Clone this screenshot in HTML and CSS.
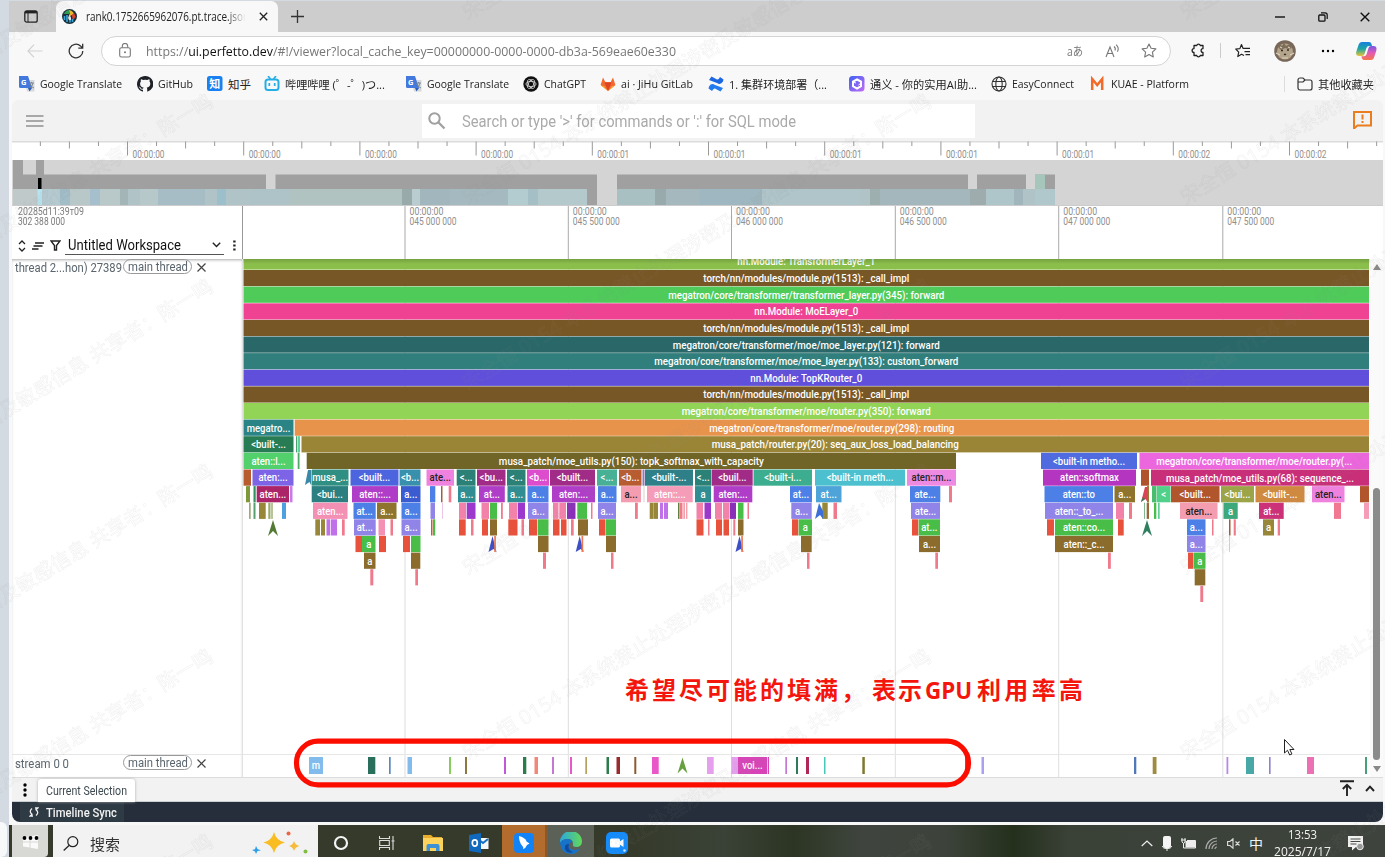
FILE: index.html
```html
<!DOCTYPE html>
<html lang="zh">
<head>
<meta charset="utf-8">
<title>Perfetto UI</title>
<link rel="stylesheet" href="styles.css">
</head>
<body>
<div class="desktop">
<div class="rail"><i></i></div>
<div class="window">
  <div class="tabstrip">
    <svg class="workspaces" width="14" height="13" viewBox="0 0 14 13"><rect x=".8" y=".8" width="12.4" height="11.4" rx="2" fill="none" stroke="#222" stroke-width="1.3"/><path d="M1 2.200h12" stroke="#222" stroke-width="2.400"/><path d="M4 3v9" stroke="#222" stroke-width="1"/></svg>
    <div class="tab">
      <svg width="15" height="15" viewBox="0 0 15 15"><circle cx="7.5" cy="7.5" r="7.5" fill="#17303c"/><path d="M2 5a6 6 0 0 1 5-4v4z" fill="#2e9b50"/><path d="M7 1a6 6 0 0 1 5 4l-4 2z" fill="#e9b52c"/><path d="M12 4l1.800 4-3 3-1-5z" fill="#d9402f"/><path d="M2.500 7v4M5 6v7M8 8v5.500M10.500 10v3" stroke="#3aa6d8" stroke-width="1.600" fill="none"/><path d="M6 9l1.500-4L9 9v2H7z" fill="#fff" opacity=".8"/></svg>
      <span class="title" data-w="163">rank0.1752665962076.pt.trace.json</span>
      <svg width="9" height="9" viewBox="0 0 9 9"><path d="M.8.8l7.400 7.400M8.200.8L.8 8.200" stroke="#222" stroke-width="1.300"/></svg>
    </div>
    <svg class="plus" width="13" height="13" viewBox="0 0 13 13"><path d="M6.500 0v13M0 6.500h13" stroke="#333" stroke-width="1.300"/></svg>
    <div class="winbtns">
      <svg width="10" height="10" viewBox="0 0 10 10"><path d="M0 5h10" stroke="#111" stroke-width="1.400"/></svg>
      <svg width="10" height="10" viewBox="0 0 10 10"><rect x=".8" y="3" width="6.200" height="6.200" rx="1" fill="none" stroke="#111" stroke-width="1.300"/><path d="M3 .8h4a2.200 2.200 0 0 1 2.200 2.200v4" fill="none" stroke="#111" stroke-width="1.200"/></svg>
      <svg width="10" height="10" viewBox="0 0 10 10"><path d="M.7.7l8.600 8.600M9.300.7L.7 9.300" stroke="#111" stroke-width="1.400"/></svg>
    </div>
  </div>
  <div class="toolbar">
    <svg width="16" height="14" viewBox="0 0 16 14"><path d="M7 .7L1 7l6 6.300M1 7h14.500" fill="none" stroke="#d2d2d2" stroke-width="1.200"/></svg>
    <svg width="16" height="16" viewBox="0 0 16 16"><path d="M14.800 8A6.800 6.800 0 1 1 12.500 2.900L14.500 5M14.700.8V5.200h-4.400" fill="none" stroke="#333" stroke-width="1.300"/></svg>
    <div class="address">
      <svg width="12" height="15" viewBox="0 0 12 15"><rect x=".7" y="4.700" width="10.600" height="9.300" rx="1.800" fill="none" stroke="#777" stroke-width="1.100"/><path d="M3.300 4.500V3.200a2.700 2.700 0 0 1 5.400 0v1.300" fill="none" stroke="#777" stroke-width="1.100"/><circle cx="6" cy="9.300" r="1" fill="#777"/></svg>
      <span class="url" data-w="530">https://<b>ui.perfetto.dev</b>/#!/viewer?local_cache_key=00000000-0000-0000-db3a-569eae60e330</span>
      <span class="translate" data-w="16">aあ</span>
      <svg width="16" height="14" viewBox="0 0 16 14"><path d="M1 13L5 3l4 10M2.400 9.500h5.200M9 2.500q2 1.500 1 4M11 .7q3.500 3 1.500 7" fill="none" stroke="#777" stroke-width="1.100"/></svg>
      <svg width="16" height="15" viewBox="0 0 16 15"><path d="M8 1l2.100 4.300 4.800.6-3.500 3.300.9 4.700L8 11.600l-4.300 2.300.9-4.700L1.100 5.900l4.800-.6z" fill="none" stroke="#777" stroke-width="1.100" stroke-linejoin="round"/></svg>
    </div>
    <div class="tools">
      <svg width="15" height="15" viewBox="0 0 15 15"><path d="M3 2.500h2.700a1.900 1.900 0 0 1 3.600 0H12V5.600a1.900 1.900 0 0 0 0 3.800v3.100H9.300a1.900 1.900 0 0 1-3.600 0H3V9.400a1.900 1.900 0 0 1 0-3.800z" fill="none" stroke="#222" stroke-width="1.300" stroke-linejoin="round"/></svg>
      <i class="sep"></i>
      <svg width="16" height="15" viewBox="0 0 16 15"><path d="M9 12.500L6.500 11.300l-3.700 2.200.9-4.300L.8 6l4.100-.4L6.500 1.500 8 5.400h7M9.500 8.700h5.500M10.500 11.700h4.500" fill="none" stroke="#222" stroke-width="1.200" stroke-linejoin="round"/></svg>
      <svg width="22" height="22" viewBox="0 0 22 22"><circle cx="11" cy="11" r="10.800" fill="#79685a"/><circle cx="11" cy="11.500" r="8" fill="#b3a48b"/><path d="M4 7l1-3 3 2 2-3 2 3 4-2 2 4-3 1-4-1-4 2z" fill="#7d6c58"/><path d="M7 10.500h2M13 10h2M10 14l1 .7 1-.7" stroke="#372c24" stroke-width="1.400" fill="none"/><path d="M2 13l4 2M16 15l4-2M8 18h6M6 7l2 1M14 7l2 1" stroke="#ddd1bb" stroke-width="1.200"/></svg>
      <svg width="14" height="4" viewBox="0 0 14 4"><circle cx="2" cy="2" r="1.200"/><circle cx="7" cy="2" r="1.200"/><circle cx="12" cy="2" r="1.200"/></svg>
      <svg width="21" height="20" viewBox="0 0 21 20"><defs><linearGradient id="cpa" x2="0" y2="1"><stop stop-color="#187fe0"/><stop offset=".5" stop-color="#20a7a1"/><stop offset="1" stop-color="#e9c437"/></linearGradient><linearGradient id="cpb" x2="0" y2="1"><stop stop-color="#7558e6"/><stop offset=".5" stop-color="#e45ab4"/><stop offset="1" stop-color="#f5764a"/></linearGradient></defs><path d="M6 1h7q2 0 2.500 2l.5 2h-3q-2 0-2.600 2L8.500 13q-.6 2-2.500 2H3q-4 0-2.500-5L2.500 4Q3.500 1 6 1z" fill="url(#cpa)"/><path d="M15 19H8q-2 0-2.500-3.800H8q2 0 2.600-2L12.500 7q.6-2 2.500-2h2.500q4 0 2.700 5l-2 6Q17.400 19 15 19z" fill="url(#cpb)"/></svg>
    </div>
  </div>
  <div class="bookmarks">
    <a><svg class="ico" viewBox="0 0 16 16"><use href="#gt"/></svg><span data-w="82">Google Translate</span></a>
    <a><svg class="ico" viewBox="0 0 16 16"><path fill="#1f2328" d="M8 0C3.600 0 0 3.600 0 8c0 3.500 2.300 6.500 5.500 7.600.4.100.5-.2.500-.4v-1.500c-2 .4-2.700-.9-2.900-1.400-.4-.9-1-1-1.300-1.300-.3-.3 1.100-.8 2 .9.700 1.200 1.800.9 2.300.7.100-.6.300-.9.600-1.100-1.800-.2-3.600-.9-3.600-4 0-.9.300-1.600.8-2.100-.1-.2-.4-1 .1-2.100 0 0 .7-.2 2.200.8a7.500 7.500 0 0 1 4 0c1.500-1 2.200-.8 2.200-.8.400 1.100.2 1.900.1 2.100.5.600.8 1.300.8 2.100 0 3.100-1.900 3.800-3.700 4 .3.200.6.700.6 1.500v2.200c0 .2.100.5.600.4A8 8 0 0 0 8 0z"/></svg><span data-w="35">GitHub</span></a>
    <a><svg class="ico" viewBox="0 0 16 16"><rect width="15.500" height="15" rx="2.500" fill="#1880f0"/><text x="7.800" y="12" text-anchor="middle" font-size="11" font-weight="700" fill="#fff">知</text></svg><span data-w="23">知乎</span></a>
    <a><svg class="ico" viewBox="0 0 16 16"><rect x="1.500" y="3.500" width="13" height="10.500" rx="2.500" fill="none" stroke="#25aee5" stroke-width="2"/><path d="M4 0l2.500 3M12 0L9.500 3M5.300 7v3M10.700 7v3" stroke="#25aee5" stroke-width="1.700"/></svg><span data-w="100">哔哩哔哩 (゜-゜)つ...</span></a>
    <a><svg class="ico" viewBox="0 0 16 16"><use href="#gt"/></svg><span data-w="82">Google Translate</span></a>
    <a><svg class="ico" viewBox="0 0 16 16"><circle cx="8" cy="8" r="7.700" fill="#111"/><g fill="none" stroke="#ddd" stroke-width=".8"><ellipse cx="8" cy="8" rx="5" ry="2.600"/><ellipse cx="8" cy="8" rx="5" ry="2.600" transform="rotate(60 8 8)"/><ellipse cx="8" cy="8" rx="5" ry="2.600" transform="rotate(120 8 8)"/></g></svg><span data-w="42">ChatGPT</span></a>
    <a><svg class="ico" viewBox="0 0 16 16"><path d="M8 15L.6 9 3 1.500 5.300 6h5.400L13 1.500 15.400 9z" fill="#f06a30"/><path d="M8 15L4.500 6.500h7z" fill="#df4326"/><path d="M8 15L1 9.500l3 .5zM8 15l7-5.500-3 .5z" fill="#faa52a"/></svg><span data-w="72">ai · JiHu GitLab</span></a>
    <a><svg class="ico" viewBox="0 0 16 16"><path d="M1 10.500q2.500-4 6-1.500l8 3-2.500 3.500L7 12.500q-1.500-.5-3 2.500L.5 12.500z" fill="#247bef"/><path d="M15 5.500q-2.500 4-6 1.500L1 4l2.500-3.500L9 3.500q1.500.5 3-2.500l3.500 2.500z" fill="#1c68e3"/></svg><span data-w="98">1. 集群环境部署（...</span></a>
    <a><svg class="ico" viewBox="0 0 16 16"><defs><linearGradient id="ty" x2="1" y2="1"><stop stop-color="#3c63f2"/><stop offset="1" stop-color="#c56bf5"/></linearGradient></defs><rect width="15.500" height="15.500" rx="3.500" fill="url(#ty)"/><path d="M8 3.500l4 2.200v4.500l-4 2.300-4-2.300V5.700z" fill="none" stroke="#fff" stroke-width="2"/><path d="M3 6l4 1M13 6.500L9.500 9" stroke="#fff"/></svg><span data-w="107">通义 - 你的实用AI助...</span></a>
    <a><svg class="ico" viewBox="0 0 16 16"><g fill="none" stroke="#333" stroke-width="1.100"><circle cx="8" cy="8" r="7"/><ellipse cx="8" cy="8" rx="3.200" ry="7"/><path d="M1.500 5.500h13M1.500 10.500h13"/></g></svg><span data-w="62">EasyConnect</span></a>
    <a><svg class="ico" viewBox="0 0 16 16"><path d="M2.200 14V3l5 6 5-6v11" fill="none" stroke="#f26a2a" stroke-width="2.500"/></svg><span data-w="78">KUAE - Platform</span></a>
    <a class="others"><svg class="ico" viewBox="0 0 16 16"><path d="M1 4a2 2 0 0 1 2-2h3l2 2h5a2 2 0 0 1 2 2v6a2 2 0 0 1-2 2H3a2 2 0 0 1-2-2zM1 6h5l2-2" fill="none" stroke="#333" stroke-width="1.200"/></svg><span data-w="56">其他收藏夹</span></a>
  </div>

  <div class="app">
    <div class="topbar">
      <svg width="18" height="12" viewBox="0 0 18 12"><path d="M0 1h17.500M0 6h17.500M0 11h17.500" stroke="#a8a8a8" stroke-width="1.900"/></svg>
      <div class="search">
        <svg width="18" height="18" viewBox="0 0 18 18"><circle cx="6.500" cy="6.500" r="5.200" fill="none" stroke="#a0a0a0" stroke-width="2"/><path d="M10.300 10.300l6.200 6.200" stroke="#a0a0a0" stroke-width="2.300"/></svg>
        <span class="roboto" data-w="334">Search or type '&gt;' for commands or ':' for SQL mode</span>
      </div>
      <svg class="warn" width="19" height="18" viewBox="0 0 19 18"><path d="M1 1h17v13.500H4.500L1 17.500z" fill="none" stroke="#ea7d1e" stroke-width="2"/><path d="M9.500 3.500v5M9.500 10v2" stroke="#ea7d1e" stroke-width="2"/></svg>
    </div>
    <svg id="overview" width="1371" height="65" viewBox="12 141 1371 65"></svg>
    <div class="head">
      <div class="shellhead">
        <div class="stamp roboto"><span data-w="66">20285d11:39<s>т</s>09</span><span data-w="47">302 388 000</span></div>
        <div class="workspace roboto">
          <svg width="8" height="12" viewBox="0 0 8 12"><path d="M1 4l3-3 3 3M1 8l3 3 3-3" fill="none" stroke="#222" stroke-width="1.300"/></svg>
          <svg width="12" height="8" viewBox="0 0 12 8"><path d="M3 1h9M1.500 4h9M0 7h6.500" stroke="#222" stroke-width="1.500"/></svg>
          <svg width="11" height="11" viewBox="0 0 11 11"><path d="M1 1h9L6.500 5.500V10h-2V5.500z" fill="none" stroke="#222" stroke-width="1.400"/></svg>
          <div class="select"><span data-w="113">Untitled Workspace</span><svg width="9" height="6" viewBox="0 0 9 6"><path d="M.8.8l3.700 3.700L8.200.8" fill="none" stroke="#222" stroke-width="1.400"/></svg></div>
          <svg width="3" height="11" viewBox="0 0 3 11"><path d="M.2.5h2.400v2H.2zM.2 4.500h2.400v2H.2zM.2 8.500h2.400v2H.2z" fill="#222"/></svg>
        </div>
      </div>
      <svg id="timeaxis" width="1140" height="53" viewBox="243 206 1140 53"></svg>
    </div>
    <div class="tracks">
      <div class="shells roboto">
        <div class="shell"><span class="name"><span data-w="107">thread 2...hon) 27389</span></span><span class="chip"><span data-w="60">main thread</span></span><svg width="9" height="9" viewBox="0 0 9 9"><path d="M.5.5l8 8M8.500.5l-8 8" stroke="#444" stroke-width="1.200"/></svg></div>
        <div class="shell last"><span class="name"><span data-w="54">stream 0 0</span></span><span class="chip"><span data-w="60">main thread</span></span><svg width="9" height="9" viewBox="0 0 9 9"><path d="M.5.5l8 8M8.500.5l-8 8" stroke="#444" stroke-width="1.200"/></svg></div>
      </div>
      <svg id="slices" width="1127" height="518" viewBox="243 259 1127 518"></svg>
      <div class="scroll"><i class="up"></i><b></b><i class="down"></i></div>
    </div>
    <div class="drawer roboto">
      <svg width="4" height="14" viewBox="0 0 4 14"><circle cx="2" cy="2" r="1.700"/><circle cx="2" cy="7" r="1.700"/><circle cx="2" cy="12" r="1.700"/></svg>
      <div class="dtab"><span data-w="81">Current Selection</span></div>
      <div class="dbtns"><svg width="14" height="16" viewBox="0 0 14 16"><path d="M0 1.200h14M7 16V5M2.800 9L7 4.800 11.200 9" fill="none" stroke="#222" stroke-width="1.900"/></svg><svg width="10" height="7" viewBox="0 0 10 7"><path d="M1 6l4-4.300L9 6" fill="none" stroke="#222" stroke-width="1.900"/></svg></div>
    </div>
    <div class="status roboto"><div class="sync"><svg width="10" height="10" viewBox="0 0 10 10"><path d="M4 9H1.200L3 7.200Q-.5 4.500 3 1.500M6 1h2.800L7 2.800Q10.500 5.500 7 8.500" fill="none" stroke="#eee" stroke-width="1.300"/></svg><span data-w="71">Timeline Sync</span></div></div>
  </div>

  <div class="taskbar">
    <div class="start"><svg width="17" height="15" viewBox="0 0 17 15"><path d="M1 3.500l6.500-1v5H1zM8.500 2.300L16 1v6.500H8.500zM1 8.500h6.500v5l-6.500-1zM8.500 8.500H16V15l-7.500-1.300z" fill="#fafafa"/><circle cx="2.500" cy="4" r="1.900"/><circle cx="8.500" cy="4" r="1.900"/><circle cx="14.500" cy="4" r="1.900"/></svg></div>
    <div class="find"><svg width="16" height="15" viewBox="0 0 16 15"><circle cx="9.800" cy="5.700" r="5" fill="none" stroke="#222" stroke-width="1.200"/><path d="M6 9.500L.7 14.500" stroke="#222" stroke-width="1.300"/></svg><span data-w="30">搜索</span>
      <svg class="sparks" width="58" height="24" viewBox="0 0 58 24"><path d="M23 1q2 8.500 11 10.500-9 2-11 10.500-2-8.500-10.500-10.500Q21 9.500 23 1z" fill="#f9bd22"/><path d="M43 10q1 4 5.500 5-4.500 1-5.500 5-1-4-5-5 4-1 5-5z" fill="#f6bb3a"/><path d="M5 15l1.500 3 3.500 1.500L6.500 20 5 23l-1-2.500L1 19l3-.7z" fill="#2d9ee8"/><circle cx="37.500" cy="2.500" r="2" fill="#ee6641"/><circle cx="54.500" cy="20.500" r="2" fill="#80bd45"/></svg></div>
    <div class="app-i"><svg width="16" height="16" viewBox="0 0 16 16"><circle cx="8" cy="8" r="6" fill="none" stroke="#f4f4f4" stroke-width="2.200"/></svg></div>
    <div class="app-i"><svg width="16" height="16" viewBox="0 0 16 16"><path d="M.5 1v2.500h10V1M.5 15v-2.500h10V15M.7 5.500h9.600v5H.7zM14 1v14M12.500 6h3" fill="none" stroke="#ddd" stroke-width="1.100"/></svg></div>
    <div class="app-i"><svg width="20" height="18" viewBox="0 0 20 18"><path d="M0 1h8l2 2h9v14H0z" fill="#e9ad2d"/><path d="M0 4h20v13H0z" fill="#fbd35d"/><path d="M3.500 17v-5q0-2 2-2h9q2 0 2 2v5H13v-3H7v3z" fill="#3d91d6"/></svg></div>
    <div class="app-i"><svg width="20" height="20" viewBox="0 0 20 20"><path d="M9 5h10.500v11H9z" fill="#f4f7fb"/><path d="M9 6l5 4 5-4" stroke="#1670c2" stroke-width="2" fill="none"/><path d="M0 2l12-2v20L0 18z" fill="#1069bc"/><ellipse cx="5.800" cy="10" rx="2.500" ry="3.200" fill="none" stroke="#fff" stroke-width="1.700"/></svg></div>
    <div class="app-i orange"><svg width="20" height="20" viewBox="0 0 20 20"><rect width="20" height="20" rx="4" fill="#1283f7"/><path d="M5 3q7 2 7.500 5.500l3 2-2.500 1.500q-1 3-4 4 1-2-1-3.500Q5 9 5 3z" fill="#fff"/></svg></div>
    <div class="app-i active"><svg width="22" height="22" viewBox="0 0 22 22"><defs><linearGradient id="ed"><stop stop-color="#2aa8df"/><stop offset="1" stop-color="#63d957"/></linearGradient></defs><path d="M0 11A11 11 0 0 1 22 9q0 6-6 6-4 0-3-3Q13 7 8 7 2 7 0 11z" fill="url(#ed)"/><path d="M0 11Q2 7 7.500 7q4 0 4.500 4-3-1-3 3 1 4 6 4 3 0 5-2-3 6-9 6Q1 22 0 11z" fill="#1673c9"/><path d="M9 12q-2 6 4 8-6 2-8-3-1-5 4-5z" fill="#114a9b"/></svg></div>
    <div class="app-i"><svg width="22" height="22" viewBox="0 0 22 22"><rect width="22" height="22" rx="5" fill="#138bfa"/><rect x="4" y="6.500" width="10" height="9" rx="1.500" fill="#fff"/><path d="M13 10l4.500-3v8L13 12z" fill="#fff"/><circle cx="18.500" cy="18.500" r="1.300" fill="#cfe5ff"/></svg></div>
    <div class="tray">
      <svg width="12" height="7" viewBox="0 0 12 7"><path d="M.7 6L6 1l5.300 5" fill="none" stroke="#eee" stroke-width="1.200"/></svg>
      <svg width="10" height="15" viewBox="0 0 10 15"><rect x="1" width="8" height="12" rx="2" fill="#f4f4f4"/><path d="M.5 10q0 2.500 4.500 2.500t4.500-2.500M5 12v3" fill="none" stroke="#eee"/></svg>
      <svg width="15" height="11" viewBox="0 0 15 11"><rect x="4.500" y="3" width="10" height="6.500" fill="#eee"/><path d="M0 2h5M1 0v4q2 3 3 0V0M2.500 5v5H14.500V2.500H6" fill="none" stroke="#eee" stroke-width="1"/></svg>
      <svg width="13" height="13" viewBox="0 0 13 13"><path d="M1 12A11 11 0 0 1 12 1M4 12a8 8 0 0 1 8-8M7 12a5 5 0 0 1 5-5M10 12a2 2 0 0 1 2-2" fill="none" stroke="#aaa" stroke-width="1.200"/></svg>
      <svg width="13" height="11" viewBox="0 0 13 11"><path d="M.6 3.500H3L6 .8v9.400L3 7.500H.6zM8.500 3.500l4 4M12.500 3.500l-4 4" fill="none" stroke="#ddd" stroke-width="1.100"/></svg>
      <span class="ime">中</span>
      <div class="clock"><span data-w="29">13:53</span><span data-w="57">2025/7/17</span></div>
      <svg width="16" height="15" viewBox="0 0 16 15"><path d="M0 0h15v11H8l-4 3.500V11H0z" fill="#f2f2f2"/><path d="M2.500 3h10M2.500 5.500h10M2.500 8h6" stroke="#454b43" stroke-width="1.100"/><circle cx="12" cy="10.500" r="3.300" fill="#999" stroke="#eee"/></svg>
    </div>
  </div>
</div>
<svg class="overlay" id="overlay" width="1385" height="857" viewBox="0 0 1385 857">
  <defs><g id="gt"><path d="M5 4h10.500v11.500H8z" fill="#d6d9dc"/><path d="M0 0h9l4 12H1.500Q0 12 0 10.500z" fill="#4379dd"/><path d="M9 12h4l-2.500 3.500z" fill="#2b5dbb"/><text x="2" y="8.500" font-size="7.500" font-weight="700" fill="#fff">G</text><path d="M10 7h5M12.500 6v1M14 7q-1 4-3 5M11 8q1 3 4 4" stroke="#758087" fill="none" stroke-width=".9"/></g></defs>
  <g id="marks"></g>
  <rect x="296.500" y="741.200" width="672" height="43.600" rx="21.500" fill="none" stroke="#fb0d00" stroke-width="5.200"/>
  <g class="note">
    <text x="625" y="699" textLength="240">希望尽可能的填满，</text>
    <text x="872" y="699" textLength="50">表示</text>
    <text x="925" y="699" textLength="47" lengthAdjust="spacingAndGlyphs">GPU</text>
    <text x="977" y="699" textLength="106">利用率高</text>
  </g>
  <path d="M1284.500 739.500v13.500l3-2.700 2.200 4.700 2.200-1-2.100-4.500h4.200z" fill="#fff" stroke="#222"/>
</svg>
</div>
<script src="script.js"></script>
</body>
</html>
```
FILE: styles.css
```css
* { box-sizing: border-box; }
body { margin: 0; overflow: hidden; font-family: "Open Sans", "Noto Sans CJK SC", sans-serif; }
svg { display: block; flex: none; }
svg text { font-family: "Open Sans", "Noto Sans CJK SC", sans-serif; }
.desktop { position: relative; width: 1385px; height: 857px; display: flex; background: #d3dae1; overflow: hidden; }
.rail { width: 9px; display: flex; align-items: flex-end; }
.rail i { width: 7px; height: 35px; background: #f7f8f9; border-radius: 0 6px 6px 0; }
.window { width: 1376px; height: 856px; margin-top: 1px; background: #f8f8f8; display: flex; flex-direction: column; }
.fit { display: inline-block; white-space: nowrap; }
.fit > span { display: inline-block; transform-origin: 0 50%; white-space: nowrap; }
.roboto { font-family: Roboto, sans-serif; }

.tabstrip { height: 31px; background: #cdcdcd; display: flex; align-items: center; padding: 0 15px 0 15px; }
.tab { width: 222px; height: 31px; margin-left: 18px; padding: 0 10px 0 6px; background: #f8f8f8; border-radius: 7px 7px 0 0; display: flex; align-items: center; }
.title { font-size: 12.500px; color: #222; margin-left: 9px; margin-right: 10px; -webkit-mask-image: linear-gradient(90deg, #000 86%, transparent 98%); }
.plus { margin-left: 13px; }
.winbtns { margin-left: auto; display: flex; gap: 32.500px; }

.toolbar { height: 35px; display: flex; align-items: center; margin-top: 1px; padding-left: 18px; }
.toolbar > svg + svg { margin-left: 25px; }
.address { width: 1070px; height: 30px; margin-left: 17px; padding: 0 13px 0 17px; border: 1px solid #d4d4d4; border-radius: 15px; background: #fff; display: flex; align-items: center; }
.url { font-size: 13px; color: #777; margin-left: 15px; }
.url b { font-weight: 400; color: #111; }
.translate { margin-left: auto; margin-right: 22px; font-size: 12px; color: #777; }
.address > svg:last-child { margin-left: 20px; }
.tools { display: flex; align-items: center; margin-left: 20px; gap: 14px; }
.sep { width: 1px; height: 15px; background: #ccc; }
.tools .sep + svg { margin-right: 9px; }
.tools svg:nth-last-child(2) { margin-left: 11px; margin-right: 7px; }

.bookmarks { height: 32px; padding: 0 0 1px 10px; display: grid; align-items: center; grid-template-columns: 118px 70px 57px 142px 117px 77px 108px 141px 142px 99px 194px 90px; font-size: 11.500px; color: #222; }
.bookmarks a { display: flex; align-items: center; gap: 5px; }
.ico { width: 16px; height: 16px; }
.bookmarks .others { border-left: 1px solid #ddd; height: 16px; padding-left: 12px; }

.app { width: 1371px; height: 722px; margin-left: 3px; border-radius: 6px 6px 8px 8px; overflow: hidden; background: #fff; }
.topbar { height: 41px; background: #f2f2f2; display: flex; align-items: center; padding: 1px 11px 0 14px; }
.search { width: 553px; height: 34px; margin-left: 378px; padding-left: 6px; background: #fff; display: flex; align-items: center; }
.search .roboto { margin-left: 16px; font-size: 16.500px; color: #aaa; }
.warn { margin: -2px 0 0 auto; }
.head { display: flex; height: 53px; }
.shellhead { width: 231px; border-right: 1px solid #999; padding: 1px 5px 0 6px; display: flex; flex-direction: column; }
.stamp { display: flex; flex-direction: column; font-size: 10px; line-height: 10px; color: #7c7c7c; }
.stamp .fit { height: 10px; }
.stamp s { text-decoration: none; }
.workspace { display: flex; align-items: center; height: 19px; margin-top: 9px; }
.workspace > svg + svg { margin-left: 6px; }
.select { width: 159px; height: 19px; margin: 0 3px 0 4px; padding: 0 3px; border-bottom: 1px solid #555; display: flex; align-items: center; justify-content: space-between; font-size: 14.500px; color: #111; }
.select + svg { margin-left: 6px; }
.tracks { display: flex; height: 518px; }
.shells { width: 231px; flex: none; display: flex; flex-direction: column; justify-content: space-between; border-right: 1px solid #e2e2e2; color: #5a656d; font-size: 12.500px; box-shadow: inset 0 2px 3px -1px #aaa; }
.shell { height: 23px; display: flex; align-items: flex-start; padding-left: 3px; }
.name { width: 109px; line-height: 17px; }
.chip { width: 69px; height: 15px; line-height: 13px; padding-left: 4px; margin: 0 5px 0 -1px; border: 1px solid #999; border-radius: 8px; }
.shell > svg { margin-top: 4px; }
.shell.last { border-top: 1px solid #e6e6e6; }
.scroll { width: 13px; background: #fafafa; display: flex; flex-direction: column; align-items: center; padding: 5px 0 5px 0; }
.scroll i { width: 0; height: 0; border: 4px solid transparent; }
.scroll .up { border-bottom: 6px solid #888; border-top: 0; }
.scroll .down { border-top: 6px solid #888; border-bottom: 0; margin-top: 6px; }
.scroll b { width: 7px; height: 272px; margin-top: auto; border-radius: 4px; background: #8b8b8b; }
.drawer { height: 25px; background: #f2f2f2; border-top: 1px solid #dcdcdc; border-bottom: 1px solid #c8ced2; display: flex; align-items: center; padding: 0 8px 0 11px; color: #3f4a51; font-size: 12.500px; }
.dtab { width: 97px; height: 23px; line-height: 24px; margin: 2px 0 0 11px; padding-left: 8px; background: #fff; border-radius: 3px 3px 0 0; box-shadow: 0 0 3px #aaa; }
.dbtns { display: flex; align-items: center; gap: 11px; margin: -3px 0 0 auto; }
.status { height: 20px; background: #252e3a; padding-left: 8px; color: #f2f2f2; font-size: 13px; font-weight: 500; }
.sync { width: 104px; height: 20px; background: #2e3a44; padding-left: 9px; display: flex; align-items: center; gap: 7px; }

.taskbar { height: 32px; margin-top: 3px; display: flex; background: linear-gradient(90deg, #353a2a 0, #353a2a 45%, #3a4237 52%, #2c3523 57%, #3f453e 62%, #3d433b 68%, #24301c 73%, #3a4137 77%, #3e443d 100%); }
.start { width: 36px; margin: 0 5px 0 3px; background: #d8d9d4; border-radius: 0 0 4px 0; display: flex; align-items: center; justify-content: center; }
.find { width: 265px; background: #f2f2f2; display: flex; align-items: center; padding: 4px 9px 0 10px; color: #333; font-size: 15px; }
.find .fit { margin-left: 11px; }
.sparks { margin-left: auto; }
.app-i { width: 46px; display: flex; align-items: center; justify-content: center; padding-top: 4px; }
.orange { background: #b26c2e; border-right: 3px solid #8c5828; }
.active { background: #5b6157; }
.tray { margin-left: auto; padding: 5px 21px 0 0; display: flex; align-items: center; color: #f2f2f2; }
.tray > svg { margin-right: 9px; }
.tray > svg:last-child { margin: 0; }
.ime { width: 14px; font-size: 14px; line-height: 20px; margin-right: 9px; }
.clock { width: 60px; margin-right: 16px; margin-top: -1px; display: flex; flex-direction: column; align-items: center; font-size: 12px; line-height: 17px; }
.clock .fit { height: 17px; }

.overlay { position: absolute; left: 0; top: 0; pointer-events: none; }
.note { font-size: 24px; font-weight: 700; fill: #f4160c; }
.mark { font-size: 20px; fill: none; stroke: #8a8a8a; stroke-width: .5; opacity: .14; }
.cond { font-family: Roboto, sans-serif; font-size: 11.500px; font-weight: 500; }
.axis { font-family: Roboto, sans-serif; font-size: 10px; fill: #8f8f8f; }
```
FILE: script.js
```js
// Squeeze each labelled span to its design width.
document.querySelectorAll('[data-w]').forEach(function (el) {
  var w = +el.dataset.w;
  var inner = document.createElement('span');
  while (el.firstChild) inner.appendChild(el.firstChild);
  el.appendChild(inner);
  el.classList.add('fit');
  var n = inner.getBoundingClientRect().width;
  inner.style.transform = 'scaleX(' + w / n + ')';
  el.style.width = w + 'px';
});

function rect(x1, x2, y, h, c) {
  return '<rect x="' + x1 + '" y="' + y + '" width="' + (x2 - x1) + '" height="' + h + '" fill="' + c + '"/>';
}
function esc(s) { return s.replace(/</g, '&lt;'); }
var grid = [405, 568.3, 731.5, 895.3, 1058.7, 1222.8];

// Overview: ticks and CPU usage bands
var o = rect(12, 1383, 141, 65, '#fff') + rect(12, 1383, 141, 1.5, '#dcdcdc');
for (var i = -3; i < 44; i++) {
  var x = 127.5 + 29.05 * i, m = ((i % 4) + 4) % 4;
  o += rect(x - .5, x + .5, 141.5, m === 0 ? 14 : m === 2 ? 7 : 4.500, '#999');
  if (m === 0 && x < 1320) {
    var s = i < 16 ? '00:00:00' : i < 36 ? '00:00:01' : '00:00:02';
    o += '<text class="axis" x="' + (x + 5) + '" y="158" textLength="32" lengthAdjust="spacingAndGlyphs">' + s + '</text>';
  }
}
o += rect(12, 1383, 160, 45.5, '#d4d4d4');
[[13, 266], [275.5, 597], [617, 968], [977, 1026], [1035, 1055]].forEach(function (b) { o += rect(b[0], b[1], 174.5, 14.5, '#a0a0a0'); });
o += rect(13, 23, 160, 15, '#a0a0a0') + rect(36, 44, 160, 15, '#a0a0a0') + rect(587, 597, 189, 16.5, '#a0a0a0') + rect(1035, 1045, 174.5, 14.5, '#a6c5bb');
o += rect(13, 587, 189, 16, '#b0c3c7') + rect(617, 1055, 189, 16, '#b0c3c7');
[[13, 38, '#c0c9c9'], [42, 60, '#b4cad0'], [60, 70, '#a1bdc8'], [70, 90, '#b8c8c9'], [90, 100, '#a5c0cc'], [100, 120, '#b9c8c9'], [120, 128, '#a3b5b6'], [140, 158, '#b6c8ca'], [158, 205, '#a6bdc5'], [217, 226, '#9bbfcb'], [250, 290, '#adc3c7'], [290, 402, '#b0c3c0'], [402, 412, '#98aaaa'], [412, 420, '#b9cdd1'], [420, 450, '#a1b7bd'], [450, 508, '#a5bac0'], [508, 528, '#b2cccf'], [528, 538, '#a4bfc6'], [538, 587, '#b3c9cc'], [617, 655, '#a9c0c2'], [655, 666, '#98aaac'], [666, 700, '#a5b8be'], [700, 762, '#9fb7c0'], [762, 860, '#afc5c9'], [870, 880, '#9eafb0'], [880, 970, '#a4b7bd'], [970, 986, '#9eacae'], [986, 1014, '#aec5c9'], [1014, 1023, '#a0b5bc'], [1035, 1055, '#b0c8cc']]
  .forEach(function (b) { o += rect(b[0], b[1], 189, 16.5, b[2]); });
o += rect(38, 41.5, 178, 12, '#000') + rect(37.5, 42, 189, 16.5, '#b7e4f0');
o += rect(12, 1383, 205, 1, '#ccc');
document.getElementById('overview').innerHTML = o;

// Time axis
var t = '', labels = ['045 000 000', '045 500 000', '046 000 000', '046 500 000', '047 000 000', '047 500 000'];
grid.forEach(function (x, i) {
  t += rect(x - .5, x + .5, 206, 53, '#aaa');
  t += '<text class="axis" x="' + (x + 4.500) + '" y="215" textLength="34" lengthAdjust="spacingAndGlyphs">00:00:00</text>';
  t += '<text class="axis" x="' + (x + 4.500) + '" y="224.500" textLength="47" lengthAdjust="spacingAndGlyphs">' + labels[i] + '</text>';
});
document.getElementById('timeaxis').innerHTML = t;

// Slices: [row, [x1, x2, colour, label, dark text]...]
var G = '#48bd48', R = '#e8513b', P = '#f0798c', K = '#f382aa', B = '#8c6c2c', BL = '#4d80e6', V = '#9084e8', PU = '#9c38cc', OL = '#988738', T = '#2b8176', T2 = '#308e92', M = '#a02c88', M2 = '#b03dc8', BR = '#785726', W = 1369;
var rows = [
  [[243.5, W, '#8bbf4b', 'nn.Module: TransformerLayer_1', 0, 138]],
  [[243.5, W, BR, 'torch/nn/modules/module.py(1513): _call_impl', 0, 206]],
  [[243.5, W, '#4ecb59', 'megatron/core/transformer/transformer_layer.py(345): forward', 0, 276]],
  [[243.5, W, '#ef4292', 'nn.Module: MoELayer_0', 0, 104]],
  [[243.5, W, BR, 'torch/nn/modules/module.py(1513): _call_impl', 0, 206]],
  [[243.5, W, '#2a6768', 'megatron/core/transformer/moe/moe_layer.py(121): forward', 0, 267]],
  [[243.5, W, '#317f7c', 'megatron/core/transformer/moe/moe_layer.py(133): custom_forward', 0, 304]],
  [[243.5, W, '#604fdb', 'nn.Module: TopKRouter_0', 0, 112]],
  [[243.5, W, BR, 'torch/nn/modules/module.py(1513): _call_impl', 0, 206]],
  [[243.5, W, '#91d456', 'megatron/core/transformer/moe/router.py(350): forward', 0, 249]],
  [[243.5, 293.5, '#2a8384', 'megatro...'], [294.7, W, '#e8934b', 'megatron/core/transformer/moe/router.py(298): routing', 0, 245]],
  [[243.5, 293.5, '#277c54', '<built-...'], [296, 297, '#4c9e6e'], [297.5, 300, '#5ed49a'], [301.5, W, '#9a8537', 'musa_patch/router.py(20): seq_aux_loss_load_balancing', 0, 247]],
  [[243.5, 293.5, '#52d06c', 'aten::l...'], [297.7, 299.5, '#4fa868'], [306.7, 956, '#716427', 'musa_patch/moe_utils.py(150): topk_softmax_with_capacity', 0, 265], [1041, 1137, '#506be0', '<built-in metho...'], [1139.5, W, '#ec66dd', 'megatron/core/transformer/moe/router.py(...', 0, 196]],
  [[243.5, 251, '#b85c30'], [252.5, 293.5, '#7d64e6', 'aten:...'], [312, 348.5, '#2f8f82', 'musa_...'], [350.5, 398.5, '#4c64de', '<built...'], [399.5, 420.5, '#3990ad', '<b...'], [426.5, 454, '#ef82de', 'ate...', 1], [456.7, 475.5, T, '<...'], [477, 505.5, M, '<bu...'], [507, 525.5, T, '<...'], [527, 549, '#de4cce', '<b...'], [550, 595, M, '<built...'], [597, 617, '#45b296', '<...'], [619, 641.5, '#b85c30', '<b...'], [642.5, 644.5, '#9278be'], [645, 693, '#2e7f88', '<built-...'], [695, 711.5, T, '<...'], [712, 752.7, M, '<buil...'], [753.5, 812, '#3cae8f', '<built-i...'], [815, 905, '#4cc0cf', '<built-in meth...'], [907, 956, '#ef8ae2', 'aten::m...', 1], [1043, 1136, '#b436c0', 'aten::softmax'], [1141, 1149, '#b0522c'], [1151, W, '#c92e78', 'musa_patch/moe_utils.py(68): sequence_...', 0, 188]],
  [[246, 250, '#80983c'], [253.5, 255.7, '#2f9060'], [256.7, 289, '#ab2468', 'aten...'], [290, 292.5, '#c77be6'], [311.7, 348, '#2b7f80', '<bui...'], [352, 398, M2, 'aten::...'], [401, 420.5, '#3a5cd0', 'a...'], [430, 435.3, BL], [441, 442.5, '#a06040'], [448.7, 451.3, P], [458, 475.5, T2, 'a...'], [479, 504.8, M2, 'at...'], [507.5, 525.5, T2, 'a...'], [527.5, 548.5, BL, 'a...'], [552, 595, M2, 'aten:...'], [598, 616.5, BL, 'a...'], [621, 641, '#f49cb0', 'a...', 1], [643.5, 644.5, '#ddd0c8'], [647, 692.7, '#f49cb8', 'aten::...'], [695, 711, T2, 'a'], [713.7, 752.3, M2, 'aten:...'], [790, 812, BL, 'at...'], [816, 841.5, '#4ea4d8', 'at...'], [910, 940.3, BL, 'ate...'], [949, 952, P], [1044.5, 1113, BL, 'aten::to'], [1114.5, 1135, '#8e742c', 'a...'], [1147, 1149, '#9a7830'], [1152, 1156.5, '#48bd70'], [1157, 1170.5, '#50d088', '<'], [1171, 1219.5, '#b0552c', '<built...'], [1221, 1254, '#9ca448', '<bui...'], [1255.5, 1304.5, '#d08a40', '<built-...'], [1312, 1344.5, '#ef82de', 'aten...', 1], [1360, W, '#b0552c']],
  [[249, 250.7, '#9aac7c'], [253.5, 255.5, '#58a070'], [259, 265.7, OL], [268.3, 270.5, '#98ac68'], [271, 273, '#b8c49a'], [282, 286, '#4ea0e0'], [313, 347.5, '#f490b4', 'aten...'], [353.5, 375.7, BL, 'at...'], [377, 396.5, '#8e742c', 'a...'], [401.5, 420.5, BL, 'a...'], [430.5, 435, V], [442, 442.8, '#e8b8e0'], [459, 466, K], [466.7, 475.5, PU], [481.5, 489, K], [490, 497, G], [501, 502.8, P], [509, 517.5, K], [518, 525, PU], [528, 548.5, V, 'a...'], [553, 558.5, K], [559.3, 566, K], [567, 575.5, '#8a30b8'], [577.3, 587, G], [591, 592.5, P], [598, 616, V, 'a...'], [635, 637.8, P], [649.7, 653.7, OL], [654, 658, OL], [660, 663, '#c070e8'], [664, 668, '#c070e8'], [678, 679.5, '#608040'], [680, 682.500, P], [683.5, 684.7, P], [686.3, 687.3, P], [696.5, 703, K], [704.5, 711, PU], [715, 722, K], [723, 729, K], [729.7, 736, '#8a30b8'], [738, 743.5, G], [747.5, 749, P], [791.3, 811.7, V, 'a...'], [822.3, 827.7, OL], [833.5, 837, P], [911, 940, V, 'ate...'], [1045, 1113, V, 'aten::_to_...'], [1116, 1124, K], [1129, 1132, P], [1144, 1145, '#80b890'], [1146.7, 1149, '#9a6838'], [1154, 1156.3, G], [1158, 1159.7, '#60d098'], [1180, 1217.5, '#f49cb0', 'aten...', 1], [1223.5, 1237.7, '#3ca87c', 'a'], [1259, 1283.7, '#cc3078', 'at...'], [1334, 1341, '#f07890'], [1364, W, '#f49cb8']],
  [[315.3, 320, OL], [321, 325, OL], [326.5, 330, '#c070e8'], [330.7, 337, '#c070e8'], [342, 344.7, P], [354, 375.7, V, 'at...'], [378.5, 385, '#f490b4'], [390.5, 393, P], [401.5, 420.5, V, 'a...'], [431, 432.5, '#d05838'], [433, 435.2, G], [459, 465.7, R], [471, 473.5, P], [482, 488, R], [490, 497, B], [508.3, 517.5, R], [521.5, 524, P], [529, 537.3, R], [538, 548.5, G], [553, 559.5, R], [561, 566.5, R], [571, 573.7, P], [578, 588, B], [599, 605.5, R], [606, 616, G], [696.5, 703.5, R], [708, 709.5, P], [716, 722, R], [723.5, 729, R], [733.3, 735.3, P], [738, 743.5, B], [792, 798.3, R], [798.7, 812, G, 'a'], [912, 918.3, R], [918.7, 940, G, 'at...'], [1047, 1054, R], [1055, 1113, G, 'aten::co...'], [1118, 1123.7, R], [1187, 1205.5, BL, 'a...'], [1212, 1213.5, P], [1229, 1230.5, '#a85838'], [1233.7, 1235.8, P], [1263, 1274, OL, 'a'], [1277.7, 1280, P]],
  [[355.5, 362, R], [362, 375.5, G, 'a'], [379, 386, R], [403, 410, R], [411, 420.5, G], [538, 548.5, B], [606, 616, B], [801, 811.7, B], [919, 940, B, 'a...'], [1055, 1113, B, 'aten::_c...'], [1187, 1205.5, V, 'a...'], [1229.3, 1230, '#dcaadd']],
  [[364, 375.5, B, 'a'], [411, 420.3, B], [543, 546, P], [611, 613.5, P], [807, 809.5, P], [935.3, 938, P], [1108, 1110.8, P], [1188, 1193.5, R], [1194, 1205.5, G, 'a']],
  [[370.3, 373.3, P], [415.3, 418, P], [1194.7, 1205.3, B]],
  [[1200.3, 1203.2, P]]
];
function label(x1, x2, y, s, dark, w) {
  var fit = w ? ' textLength="' + w + '" lengthAdjust="spacingAndGlyphs"' : '';
  var tr = w ? '' : ' transform="translate(' + ((x1 + x2) / 2) + ' 0) scale(.83 1)"';
  return '<text class="cond" text-anchor="middle" x="' + (w ? (x1 + x2) / 2 : 0) + '" y="' + y + '" fill="' + (dark ? '#222' : '#fff') + '"' + fit + tr + '>' + esc(s) + '</text>';
}
function arrow(cx, y, c) {
  return '<path d="M' + cx + ' ' + y + 'l5 16-5-5-5 5z" fill="' + c + '"/>';
}
var g = rect(243, 1370, 259, 518, '#fff');
grid.forEach(function (x) { g += rect(x - .5, x + .5, 259, 518, '#dedede'); });
g += rect(243, 1370, 754, 1, '#e6e6e6');
rows.forEach(function (row, r) {
  var y = 253.4 + 16.62 * r;
  row.forEach(function (s) {
    g += rect(s[0], s[1], y.toFixed(1), 16.2, s[2]);
    if (s[3]) g += label(s[0], s[1], (y + 12).toFixed(1), s[3], s[4], s[5]);
  });
});
g += '<path d="M308 470l3.500 0v16l-2-4-4.500 3z" fill="#3c89a5"/>';
g += arrow(273, 520, '#527a35') + arrow(1147, 520, '#2f8060') + arrow(682.5, 757.5, '#68a040');
g += '<path d="M819 503l4 8v8l-3-4-5 4z" fill="#3c70d8"/>';
g += '<path d="M1145 487l2.500 0v15l-2-3-4.500 3z" fill="#d84458"/><path d="M1143 497l-2 5 4-3z" fill="#308060"/>';
[[492.5, 494.2], [579.7, 581.5], [739.5, 741.2]].forEach(function (a) {
  g += '<path d="M' + a[0] + ' 536l4 16-3-3-5 3z" fill="#3e4fc5"/>' + rect(a[1], a[1] + 1.700, 536, 16, '#ee7850');
});
[[309, 323, '#82bcec', 'm'], [368, 375.3, '#2a6e5c'], [389, 390.7, '#5a88c0'], [407.5, 412, '#82bcec'], [449, 451, '#88cc60'], [465, 467, '#8c7840'], [504, 506, '#c058d8'], [523, 526.3, '#2c7c4c'], [534.5, 538, '#f08878'], [552, 554, '#c478d4'], [570, 572, '#e858c8'], [585.3, 587, '#b8a060'], [606.5, 609, '#2c7c4c'], [616.5, 620, '#982c2c'], [634.3, 636.3, '#8c5c30'], [652, 658.7, '#e858c8'], [707, 713.7, '#e4a0ec'], [731.3, 738, '#e4a0ec'], [738, 767, '#d844b8', 'voi...'], [767.7, 769, '#d844b8'], [785.3, 787, '#c478d4'], [796, 798, '#2c7c5c'], [806, 809, '#b02858'], [824, 825.5, '#48c8b8'], [862.3, 864.8, '#807830'], [965, 967, '#389050'], [981.5, 984, '#a8a0f0'], [1134, 1136.300, '#5078b8'], [1152.7, 1156.5, '#a08c40'], [1226.5, 1228.3, '#b888e8'], [1246, 1254, '#48a8a8'], [1269, 1270.6, '#9080d0'], [1307, 1314, '#ec70b4'], [1365, 1367, '#48a078']]
  .forEach(function (s) {
    g += rect(s[0], s[1], 757, 17, s[2]);
    if (s[3]) g += label(s[0], s[1], 769, s[3]);
  });
g += '<defs><linearGradient id="sh" x2="0" y2="1"><stop stop-opacity=".16"/><stop offset="1" stop-opacity="0"/></linearGradient></defs><rect x="243" y="259" width="1127" height="5" fill="url(#sh)"/>';
document.getElementById('slices').innerHTML = g;

// Diagonal watermark tiling
var wm = '';
for (var a = -1; a < 3; a++) for (var b = 0; b < 8; b++) {
  wm += '<text class="mark" textLength="545" transform="translate(' + (468 + 718 * a) + ' ' + (20 + 185 * b) + ') rotate(-31.500)">宋全恒 0154 本系统禁止处理涉密及敏感信息 共享者：陈一鸣</text>';
}
document.getElementById('marks').innerHTML = wm;
```
